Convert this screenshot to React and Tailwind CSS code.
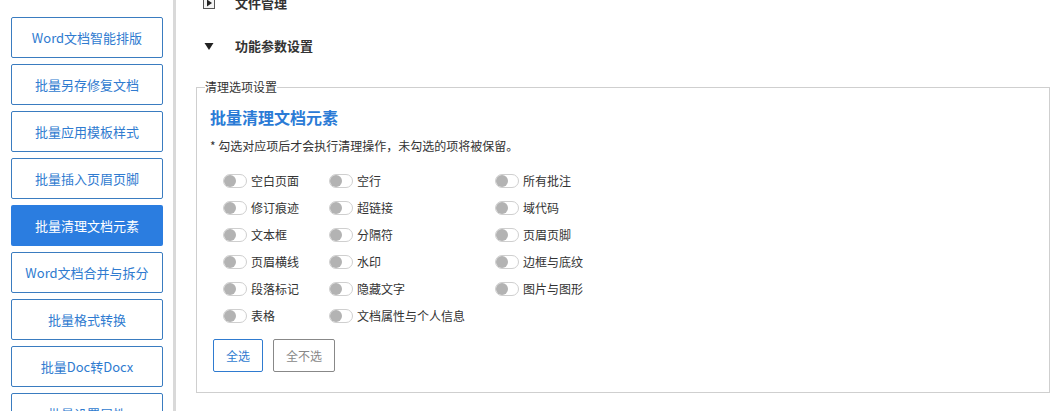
import React from 'react';

const FONT = { fontFamily: '"Microsoft YaHei", "Noto Sans CJK SC", "Noto Sans", sans-serif' };

const menu = [
  'Word文档智能排版',
  '批量另存修复文档',
  '批量应用模板样式',
  '批量插入页眉页脚',
  '批量清理文档元素',
  'Word文档合并与拆分',
  '批量格式转换',
  '批量Doc转Docx',
  '批量设置属性',
];

const columns = [
  { width: 'w-[106px]', items: ['空白页面', '修订痕迹', '文本框', '页眉横线', '段落标记', '表格'] },
  { width: 'w-[166px]', items: ['空行', '超链接', '分隔符', '水印', '隐藏文字', '文档属性与个人信息'] },
  { width: 'w-[166px]', items: ['所有批注', '域代码', '页眉页脚', '边框与底纹', '图片与图形'] },
];

const Toggle = ({ label }) => (
  <div className="h-[27px] flex items-center gap-[4px]">
    <span className="relative w-[24px] h-[14px] rounded-full border border-[#cfcfcf] bg-white shrink-0">
      <span className="absolute left-[0px] top-[0px] w-[12px] h-[12px] rounded-full bg-[#b3b3b3]" />
    </span>
    <span className="text-[12px] text-[#333] leading-none">{label}</span>
  </div>
);

const App = () => {
  return (
    <div className="w-[1060px] h-[411px] overflow-hidden bg-white flex" style={FONT}>
      {/* sidebar */}
      <div className="w-[173px] shrink-0 pl-[11px] pt-[17px] flex flex-col gap-[6px]">
        {menu.map((m, i) => (
          <button
            key={m}
            className={`w-[152px] h-[41px] shrink-0 rounded-[2px] text-[13px] flex items-center justify-center ${
              i === 4
                ? 'bg-[#2b7de0] text-white'
                : 'border border-[#3a7cc0] text-[#2f7bd0] bg-white'
            }`}
          >
            {m}
          </button>
        ))}
      </div>
      <div className="w-[3px] shrink-0 bg-[#d9d9d9]" />

      {/* main */}
      <div className="flex-1 pl-[20px] pr-[10px] -mt-[19px]">
        <div className="h-[43px] pl-[7px] flex items-center">
          <svg width="12" height="12" viewBox="0 0 12 12" className="shrink-0">
            <rect x="0.5" y="0.5" width="11" height="11" fill="#f4f4f4" stroke="#555" />
            <path d="M4 2.5 L9 6 L4 9.5 Z" fill="#222" />
          </svg>
          <span className="ml-[20px] text-[13px] font-bold text-[#333]">文件管理</span>
        </div>
        <div className="h-[43px] pl-[7px] flex items-center">
          <svg width="12" height="12" viewBox="0 0 12 12" className="shrink-0">
            <path d="M1.5 3 L10.5 3 L6 10 Z" fill="#222" />
          </svg>
          <span className="ml-[20px] text-[13px] font-bold text-[#333]">功能参数设置</span>
        </div>

        <fieldset className="mt-[12px] border border-[#cfcfcf] pl-[8px] pr-[8px] pb-[20px]">
          <legend className="text-[12px] text-[#333] leading-[16px] px-0">清理选项设置</legend>
          <div className="pl-[5px] pt-[10px]">
            <div className="text-[16px] font-bold text-[#2b7bd6] leading-[24px]">批量清理文档元素</div>
            <div className="mt-[8px] text-[12px] text-[#333] leading-[18px]">
              * 勾选对应项后才会执行清理操作，未勾选的项将被保留。
            </div>
            <div className="mt-[12px] pl-[13px] flex">
              {columns.map((c, i) => (
                <div key={i} className={`${c.width} flex flex-col`}>
                  {c.items.map((it) => (
                    <Toggle key={it} label={it} />
                  ))}
                </div>
              ))}
            </div>
            <div className="mt-[10px] pl-[3px] flex gap-[10px]">
              <button className="w-[50px] h-[33px] border border-[#2f7bd0] rounded-[2px] text-[12px] text-[#2f7bd0] bg-white">
                全选
              </button>
              <button className="w-[62px] h-[33px] border border-[#888] rounded-[2px] text-[12px] text-[#888] bg-white">
                全不选
              </button>
            </div>
          </div>
        </fieldset>
      </div>
    </div>
  );
};

export default App;
